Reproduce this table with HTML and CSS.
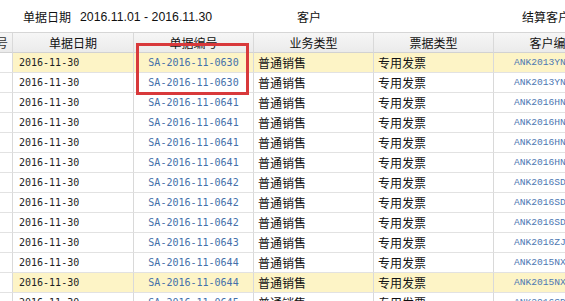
FILE: index.html
```html
<!DOCTYPE html>
<html lang="zh-CN">
<head>
<meta charset="utf-8">
<title>单据列表</title>
<link rel="stylesheet" href="styles.css">
</head>
<body>
<div class="filter-bar">
  <span class="flabel">单据日期</span>
  <span class="fval">2016.11.01 - 2016.11.30</span>
  <span class="flabel">客户</span>
  <span class="flabel">结算客户</span>
</div>
<div class="grid">
  <div class="row head">
    <div class="cell num">序号</div>
    <div class="cell">单据日期</div>
    <div class="cell">单据编号</div>
    <div class="cell">业务类型</div>
    <div class="cell">票据类型</div>
    <div class="cell">客户编号</div>
  </div>
  <div class="row sel"><div class="cell num">1</div><div class="cell date">2016-11-30</div><div class="cell code">SA-2016-11-0630</div><div class="cell txt">普通销售</div><div class="cell txt">专用发票</div><div class="cell cust">ANK2013YN001</div></div>
  <div class="row"><div class="cell num">2</div><div class="cell date">2016-11-30</div><div class="cell code">SA-2016-11-0630</div><div class="cell txt">普通销售</div><div class="cell txt">专用发票</div><div class="cell cust">ANK2013YN001</div></div>
  <div class="row"><div class="cell num">3</div><div class="cell date">2016-11-30</div><div class="cell code">SA-2016-11-0641</div><div class="cell txt">普通销售</div><div class="cell txt">专用发票</div><div class="cell cust">ANK2016HN002</div></div>
  <div class="row"><div class="cell num">4</div><div class="cell date">2016-11-30</div><div class="cell code">SA-2016-11-0641</div><div class="cell txt">普通销售</div><div class="cell txt">专用发票</div><div class="cell cust">ANK2016HN002</div></div>
  <div class="row"><div class="cell num">5</div><div class="cell date">2016-11-30</div><div class="cell code">SA-2016-11-0641</div><div class="cell txt">普通销售</div><div class="cell txt">专用发票</div><div class="cell cust">ANK2016HN002</div></div>
  <div class="row"><div class="cell num">6</div><div class="cell date">2016-11-30</div><div class="cell code">SA-2016-11-0641</div><div class="cell txt">普通销售</div><div class="cell txt">专用发票</div><div class="cell cust">ANK2016HN002</div></div>
  <div class="row"><div class="cell num">7</div><div class="cell date">2016-11-30</div><div class="cell code">SA-2016-11-0642</div><div class="cell txt">普通销售</div><div class="cell txt">专用发票</div><div class="cell cust">ANK2016SD003</div></div>
  <div class="row"><div class="cell num">8</div><div class="cell date">2016-11-30</div><div class="cell code">SA-2016-11-0642</div><div class="cell txt">普通销售</div><div class="cell txt">专用发票</div><div class="cell cust">ANK2016SD003</div></div>
  <div class="row"><div class="cell num">9</div><div class="cell date">2016-11-30</div><div class="cell code">SA-2016-11-0642</div><div class="cell txt">普通销售</div><div class="cell txt">专用发票</div><div class="cell cust">ANK2016SD003</div></div>
  <div class="row"><div class="cell num blue">10</div><div class="cell date">2016-11-30</div><div class="cell code">SA-2016-11-0643</div><div class="cell txt">普通销售</div><div class="cell txt">专用发票</div><div class="cell cust">ANK2016ZJ004</div></div>
  <div class="row"><div class="cell num">11</div><div class="cell date">2016-11-30</div><div class="cell code">SA-2016-11-0644</div><div class="cell txt">普通销售</div><div class="cell txt">专用发票</div><div class="cell cust">ANK2015NX005</div></div>
  <div class="row sel"><div class="cell num">12</div><div class="cell date">2016-11-30</div><div class="cell code">SA-2016-11-0644</div><div class="cell txt">普通销售</div><div class="cell txt">专用发票</div><div class="cell cust">ANK2015NX005</div></div>
  <div class="row"><div class="cell num">13</div><div class="cell date">2016-11-30</div><div class="cell code">SA-2016-11-0645</div><div class="cell txt">普通销售</div><div class="cell txt">专用发票</div><div class="cell cust">ANK2016SD003</div></div>
</div>
<div class="highlight"></div>
</body>
</html>
```

FILE: styles.css
```css
html, body {
  margin: 0;
  padding: 0;
  background: #ffffff;
  overflow: hidden;
}
body {
  position: relative;
  width: 565px;
  height: 301px;
  font-family: "Noto Sans CJK SC", "Noto Sans", sans-serif;
  color: #1a1a1a;
}
.filter-bar {
  box-sizing: border-box;
  height: 33px;
  padding: 1px 0 0 23px;
  display: grid;
  grid-template-columns: 57px 217px 225px 1fr;
  align-items: center;
  border-bottom: 1px solid #d6d6d6;
  white-space: nowrap;
}
.flabel {
  font-size: 12px;
  color: #111;
}
.fval {
  font-family: "Liberation Sans", Arial, sans-serif;
  font-size: 12.3px;
  color: #111;
}
.grid {
  margin-left: -28px;
}
.row {
  display: grid;
  grid-template-columns: 41px 121px 120px 120px 120px 120px;
  height: 20px;
}
.cell {
  box-sizing: border-box;
  height: 20px;
  border-right: 1px solid #d9d9d9;
  border-bottom: 1px solid #e2e2e2;
  display: flex;
  align-items: center;
  white-space: nowrap;
  overflow: hidden;
  font-size: 12px;
}
.head .cell {
  justify-content: center;
  background: linear-gradient(#f6f6f6, #ebebeb);
  border-bottom-color: #d2d2d2;
  color: #111;
}
.cell.num {
  justify-content: center;
  padding-left: 2px;
  font-family: "DejaVu Sans Mono", monospace;
  font-size: 10px;
  color: #333;
}
.head .cell.num {
  padding-left: 8px;
  font-family: "Noto Sans CJK SC", sans-serif;
  font-size: 12px;
}
.cell.num.blue {
  color: #2f6db5;
}
.row.sel .cell:not(.num) {
  background: #fdf4c6;
}
.cell.date {
  padding-left: 6px;
  font-family: "DejaVu Sans Mono", monospace;
  font-size: 10px;
  color: #1e1e1e;
}
.cell.code {
  justify-content: center;
  font-family: "DejaVu Sans Mono", monospace;
  font-size: 10px;
  color: #4470aa;
}
.cell.txt {
  padding-left: 4px;
  color: #111;
}
.cell.cust {
  padding-left: 20px;
  font-family: "Liberation Mono", monospace;
  font-size: 9.6px;
  color: #4d78b3;
}
.highlight {
  position: absolute;
  left: 136px;
  top: 43px;
  width: 113px;
  height: 52px;
  box-sizing: border-box;
  border: 3px solid #d8393b;
  pointer-events: none;
}
```
